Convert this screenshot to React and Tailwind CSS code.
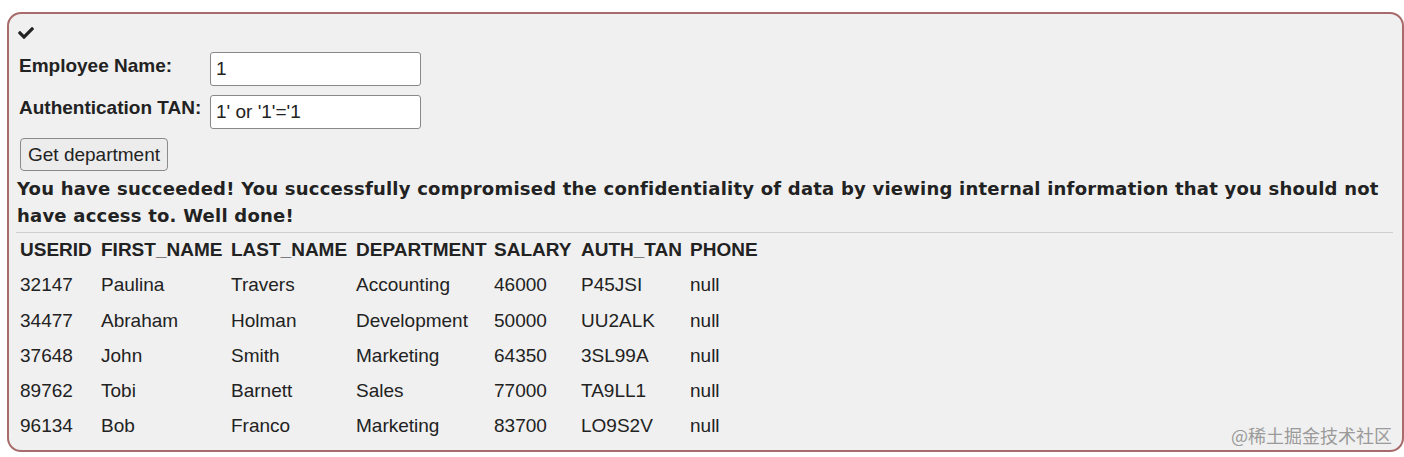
import React from 'react';

const rows = [
  ['32147', 'Paulina', 'Travers', 'Accounting', '46000', 'P45JSI', 'null'],
  ['34477', 'Abraham', 'Holman', 'Development', '50000', 'UU2ALK', 'null'],
  ['37648', 'John', 'Smith', 'Marketing', '64350', '3SL99A', 'null'],
  ['89762', 'Tobi', 'Barnett', 'Sales', '77000', 'TA9LL1', 'null'],
  ['96134', 'Bob', 'Franco', 'Marketing', '83700', 'LO9S2V', 'null'],
];

const headers = ['USERID', 'FIRST_NAME', 'LAST_NAME', 'DEPARTMENT', 'SALARY', 'AUTH_TAN', 'PHONE'];
const widths = ['w-[81px]', 'w-[130px]', 'w-[125px]', 'w-[138px]', 'w-[87px]', 'w-[109px]', 'w-[80px]'];

const CheckIcon = () => (
  <svg viewBox="0 0 512 512" className="w-[18px] h-[16px]" fill="#222">
    <path d="M173.9 439.4l-166.4-166.4c-10-10-10-26.2 0-36.2l36.2-36.2c10-10 26.2-10 36.2 0L192 312.7 432.1 72.6c10-10 26.2-10 36.2 0l36.2 36.2c10 10 10 26.2 0 36.2l-294.4 294.4c-10 10-26.2 10-36.2 0z" />
  </svg>
);

const App = () => {
  return (
    <div className="w-[1404px] h-[457px] bg-white pt-[12px] pl-[7px] font-['Liberation_Sans',Arial,sans-serif] text-[#222]">
      <div className="relative w-[1397px] h-[440px] border-2 border-[#a86a6a] rounded-[14px] bg-[#f0f0f0] pl-[7px] pr-[8px] pt-[10px]">
        <div className="h-[16px] flex items-start pl-[1px] pt-[1px]">
          <CheckIcon />
        </div>
        <table className="mt-[10px] ml-[1px] border-separate border-spacing-[2px]">
          <tbody>
            <tr>
              <td className="w-[189px] align-top p-0 pt-[3px] text-[19px] font-bold leading-[22px]">Employee Name:</td>
              <td className="p-0">
                <input
                  defaultValue="1"
                  className="w-[211px] h-[34px] bg-white border border-[#888] rounded-[3px] px-[5px] text-[19px] outline-none"
                />
              </td>
            </tr>
            <tr>
              <td className="align-top p-0 pt-[9px] text-[19px] font-bold leading-[22px]">Authentication TAN:</td>
              <td className="p-0 pt-[7px]">
                <input
                  defaultValue="1' or '1'='1"
                  className="w-[211px] h-[34px] bg-white border border-[#888] rounded-[3px] px-[5px] text-[19px] outline-none"
                />
              </td>
            </tr>
          </tbody>
        </table>
        <button className="mt-[7px] ml-[4px] h-[33px] px-[7px] border border-[#8a8a8a] rounded-[4px] bg-[#ececec] text-[19px] text-[#222] leading-none">
          Get department
        </button>
        <p className="mt-[4px] ml-[1px] font-['DejaVu_Sans',sans-serif] text-[18px] font-bold leading-[27px] tracking-[0.22px] text-[#222]">
          You have succeeded! You successfully compromised the confidentiality of data by viewing internal information that you should not have access to. Well done!
        </p>
        <div className="h-px bg-[#cfcfcf] mt-[3px] mr-[1px]" />
        <table className="ml-[4px] border-collapse">
          <thead>
            <tr className="h-[35px]">
              {headers.map((h, i) => (
                <th key={h} className={`${widths[i]} text-left font-bold text-[19px] p-0 align-middle`}>{h}</th>
              ))}
            </tr>
          </thead>
          <tbody>
            {rows.map((r) => (
              <tr key={r[0]} className="h-[35.2px]">
                {r.map((c, i) => (
                  <td key={i} className="text-[19px] p-0 align-middle">{c}</td>
                ))}
              </tr>
            ))}
          </tbody>
        </table>
        <div className="absolute right-[10px] bottom-[6px] text-[18px] text-[#9a9a9a] font-['Noto_Sans_CJK_SC',sans-serif] leading-none">
          @稀土掘金技术社区
        </div>
      </div>
    </div>
  );
};

export default App;
